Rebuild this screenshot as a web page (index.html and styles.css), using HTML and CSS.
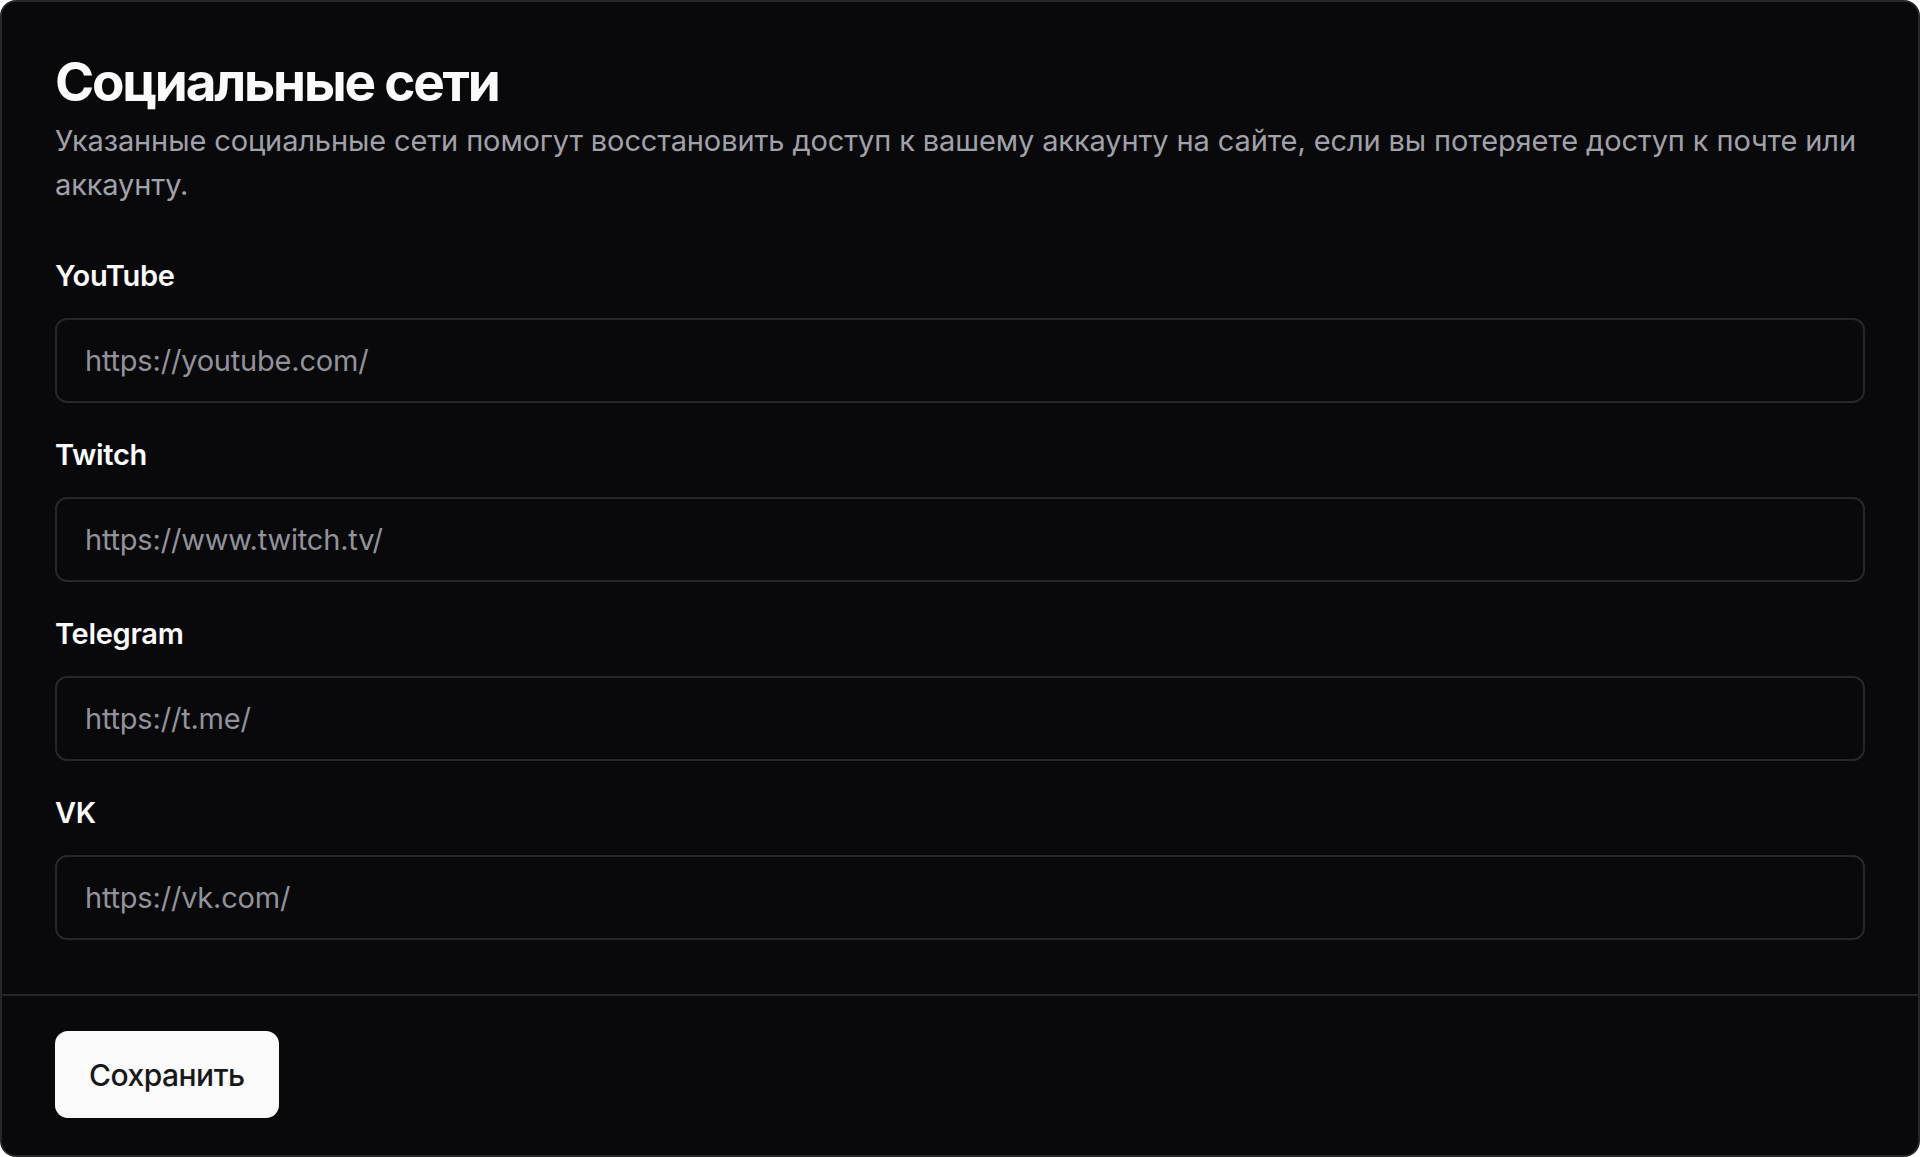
FILE: index.html
```html
<!DOCTYPE html>
<html lang="ru">
<head>
    <meta charset="UTF-8">
    <meta name="viewport" content="width=device-width, initial-scale=1.0">
    <title>Социальные сети</title>
    <link rel="stylesheet" href="styles.css">
</head>
<body>
    <form class="card">
        <div class="card-body">
            <h1 class="card-title">Социальные сети</h1>
            <p class="card-desc">Указанные социальные сети помогут восстановить доступ к вашему аккаунту на сайте, если вы потеряете доступ к почте или аккаунту.</p>

            <div class="fields">
                <div class="field">
                    <label for="youtube">YouTube</label>
                    <input id="youtube" type="text" placeholder="https://youtube.com/">
                </div>
                <div class="field">
                    <label for="twitch">Twitch</label>
                    <input id="twitch" type="text" placeholder="https://www.twitch.tv/">
                </div>
                <div class="field">
                    <label for="telegram">Telegram</label>
                    <input id="telegram" type="text" placeholder="https://t.me/">
                </div>
                <div class="field">
                    <label for="vk">VK</label>
                    <input id="vk" type="text" placeholder="https://vk.com/">
                </div>
            </div>
        </div>

        <div class="card-footer">
            <button type="submit" class="save-btn">Сохранить</button>
        </div>
    </form>
</body>
</html>
```

FILE: styles.css
```css
* {
    box-sizing: border-box;
}
body {
    margin: 0;
    background-color: #ffffff;
    font-family: Inter, "Noto Sans", sans-serif;
}
.card {
    height: 1157px;
    background: #09090b;
    border: 2px solid #27272a;
    border-radius: 16px;
    display: flex;
    flex-direction: column;
}
.card-body {
    padding: 53px 53px 54px;
}
.card-title {
    margin: 0;
    font-size: 53px;
    line-height: 55px;
    font-weight: 700;
    color: #fafafa;
    letter-spacing: -2.2px;
}
.card-desc {
    margin: 9px 0 0;
    font-size: 29px;
    line-height: 44px;
    color: #a1a1aa;
    letter-spacing: -0.12px;
}
.fields {
    margin-top: 51px;
    display: flex;
    flex-direction: column;
    gap: 34px;
}
.field {
    display: flex;
    flex-direction: column;
    gap: 25px;
}
.field label {
    font-size: 29px;
    line-height: 35px;
    font-weight: 600;
    color: #fafafa;
    letter-spacing: -0.3px;
}
.field input {
    height: 85px;
    padding: 0 28px;
    background: #09090b;
    border: 2px solid #27272a;
    border-radius: 12px;
    font-family: inherit;
    font-size: 29px;
    letter-spacing: -0.2px;
    color: #fafafa;
    outline: none;
}
.field input::placeholder {
    color: #92929b;
}
.card-footer {
    border-top: 2px solid #27272a;
    padding: 35px 53px;
}
.save-btn {
    height: 87px;
    padding: 0 34px;
    background: #fafafa;
    color: #18181b;
    border: none;
    border-radius: 13px;
    font-family: inherit;
    font-size: 30px;
    font-weight: 500;
    letter-spacing: -0.5px;
    cursor: pointer;
}
```
